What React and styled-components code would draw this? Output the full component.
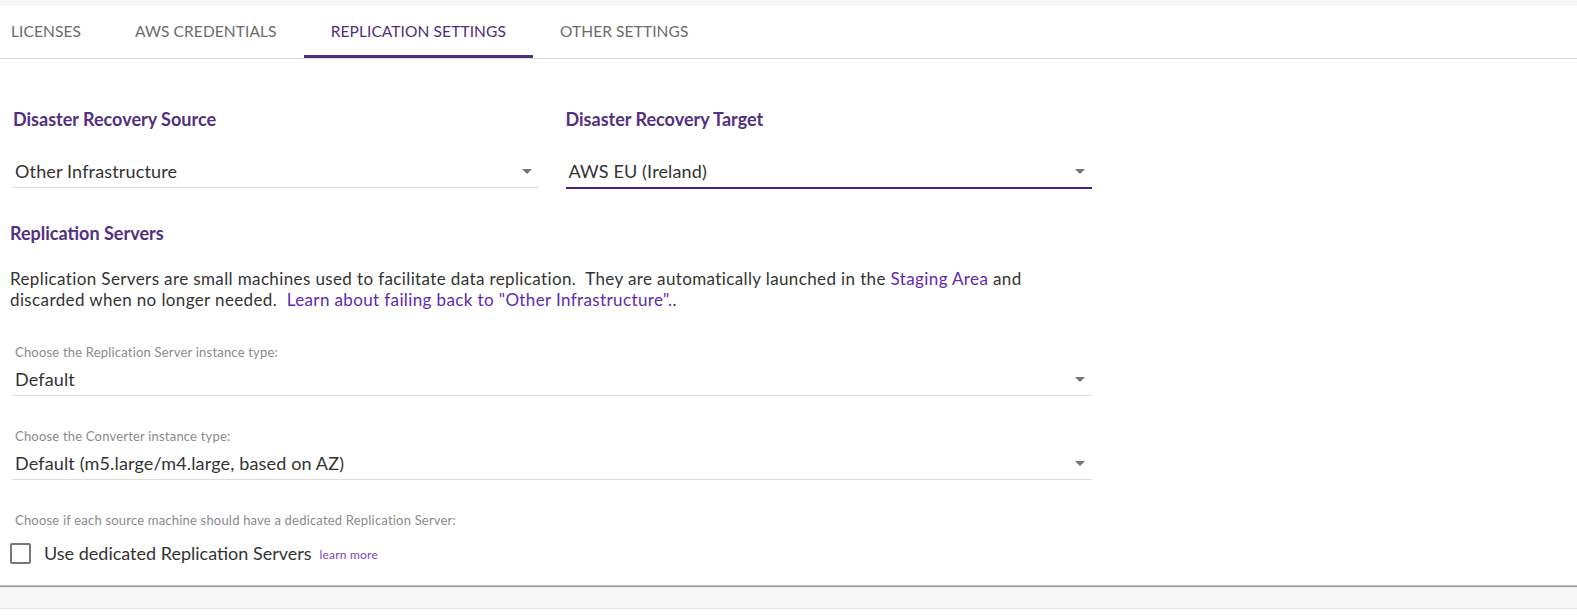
import React, { useState } from 'react';
import styled, { createGlobalStyle } from 'styled-components';

const TABS = ['Licenses', 'AWS Credentials', 'Replication Settings', 'Other Settings'];

const GlobalStyle = createGlobalStyle`
  html, body { margin: 0; padding: 0; }
  body {
    background: #f7f7f7;
    font-family: Lato, 'Open Sans', 'Liberation Sans', sans-serif;
    color: #333;
  }
`;

const Page = styled.div`
  padding-top: 4px;
  min-height: 100vh;
  box-sizing: border-box;
  display: flex;
  flex-direction: column;
  gap: 22px;
`;

const Card = styled.div`
  background: #fff;
  border-top: 1px solid #ececec;
  box-shadow: 0 1px 1px rgba(0, 0, 0, 0.35);
  border-bottom: 1px solid #b9b9b9;
`;

const NextCard = styled.div`
  background: #fff;
  border-top: 1px solid #e3e3e3;
  flex: 1;
`;

const TabBar = styled.div`
  display: flex;
  height: 54px;
  border-bottom: 1px solid #dedede;
  margin-top: -1px;
`;

const TabList = styled.div`
  display: flex;
  margin-left: -16px;
`;

const Tab = styled.button`
  border: none;
  background: none;
  padding: 3px 27px 0 27px;
  height: 54px;
  font-family: inherit;
  font-size: 15.5px;
  text-transform: uppercase;
  letter-spacing: 0.1px;
  color: ${p => (p.$active ? '#4f2d7f' : '#6b6b6b')};
  border-bottom: 3px solid ${p => (p.$active ? '#4f2d7f' : 'transparent')};
  cursor: pointer;
`;

const Content = styled.div`
  padding: 48px 10px 20px 10px;
  width: 1082px;
`;

const Columns = styled.div`
  display: grid;
  grid-template-columns: 1fr 1fr;
  gap: 27px;
  margin-left: 2px;
`;

const Column = styled.div`
  display: flex;
  flex-direction: column;
  gap: 28px;
`;

const Title = styled.h3`
  margin: 0;
  font-size: 18px;
  line-height: 24px;
  font-weight: 700;
  color: #52307f;
  margin-left: ${p => p.$indent || 0}px;
`;

const SelectBox = styled.div`
  display: flex;
  align-items: center;
  padding: 0 0 4px 3px;
  font-size: 18px;
  letter-spacing: 0.15px;
  line-height: 24px;
  color: #333;
  border-bottom: ${p => (p.$focused ? '2px solid #4a1d8c' : '1px solid #dcdcdc')};
  margin-bottom: ${p => (p.$focused ? '0' : '1px')};
  cursor: pointer;
`;

const SelectValue = styled.span`
  flex: 1;
`;

const Section = styled.div`
  margin-top: 32px;
`;

const Paragraph = styled.p`
  margin: 23px 0 0 0;
  font-size: 17px;
  letter-spacing: 0.38px;
  line-height: 21px;
  color: #333;
`;

const Link = styled.a`
  color: ${p => p.$color || '#6129b0'};
  text-decoration: none;
  cursor: pointer;
`;

const Field = styled.div`
  margin-top: ${p => p.$top}px;
  margin-left: 2px;
`;

const Helper = styled.div`
  font-size: 13px;
  letter-spacing: 0.2px;
  line-height: 16px;
  color: #8a8a8a;
  padding-left: 3px;
  margin-bottom: 7px;
`;

const CheckRow = styled.label`
  display: flex;
  align-items: center;
  margin-top: 13px;
  height: 24px;
  cursor: pointer;
`;

const Box = styled.span`
  width: 17px;
  height: 17px;
  border: 2px solid #777;
  border-radius: 2px;
  flex: none;
  background: ${p => (p.$checked ? '#4f2d7f' : '#fff')};
`;

const CheckText = styled.span`
  font-size: 18px;
  color: #333;
  margin-left: 13px;
`;

const Small = styled.span`
  font-size: 12px;
  letter-spacing: 0.2px;
  margin-left: 8px;
  margin-top: 3px;
`;

function Arrow() {
  return (
    <svg width="24" height="24" viewBox="0 0 24 24" style={{ flex: 'none' }}>
      <path d="M7 10l5 5 5-5z" fill="#757575" />
    </svg>
  );
}

function Select({ value, focused }) {
  return (
    <SelectBox $focused={focused}>
      <SelectValue>{value}</SelectValue>
      <Arrow />
    </SelectBox>
  );
}

export default function App() {
  const [active, setActive] = useState(2);
  const [dedicated, setDedicated] = useState(false);

  return (
    <>
      <GlobalStyle />
      <Page>
        <Card>
          <TabBar>
            <TabList>
              {TABS.map((t, i) => (
                <Tab key={t} $active={i === active} onClick={() => setActive(i)}>
                  {t}
                </Tab>
              ))}
            </TabList>
          </TabBar>
          <Content>
            <Columns>
              <Column>
                <Title $indent={1}>Disaster Recovery Source</Title>
                <Select value="Other Infrastructure" />
              </Column>
              <Column>
                <Title>Disaster Recovery Target</Title>
                <Select value="AWS EU (Ireland)" focused />
              </Column>
            </Columns>

            <Section>
              <Title>Replication Servers</Title>
              <Paragraph>
                Replication Servers are small machines used to facilitate data replication.&nbsp; They are
                automatically launched in the <Link>Staging Area</Link> and
                <br />
                discarded when no longer needed.&nbsp;&nbsp;
                <Link>Learn about failing back to "Other Infrastructure".</Link>.
              </Paragraph>
            </Section>

            <Field $top={34}>
              <Helper>Choose the Replication Server instance type:</Helper>
              <Select value="Default" />
            </Field>

            <Field $top={32}>
              <Helper>Choose the Converter instance type:</Helper>
              <Select value="Default (m5.large/m4.large, based on AZ)" />
            </Field>

            <Field $top={32}>
              <Helper>Choose if each source machine should have a dedicated Replication Server:</Helper>
            </Field>
            <CheckRow onClick={() => setDedicated(!dedicated)}>
              <Box $checked={dedicated} />
              <CheckText>Use dedicated Replication Servers</CheckText>
              <Small>
                <Link $color="#7b3fc4">learn more</Link>
              </Small>
            </CheckRow>
          </Content>
        </Card>
        <NextCard />
      </Page>
    </>
  );
}
